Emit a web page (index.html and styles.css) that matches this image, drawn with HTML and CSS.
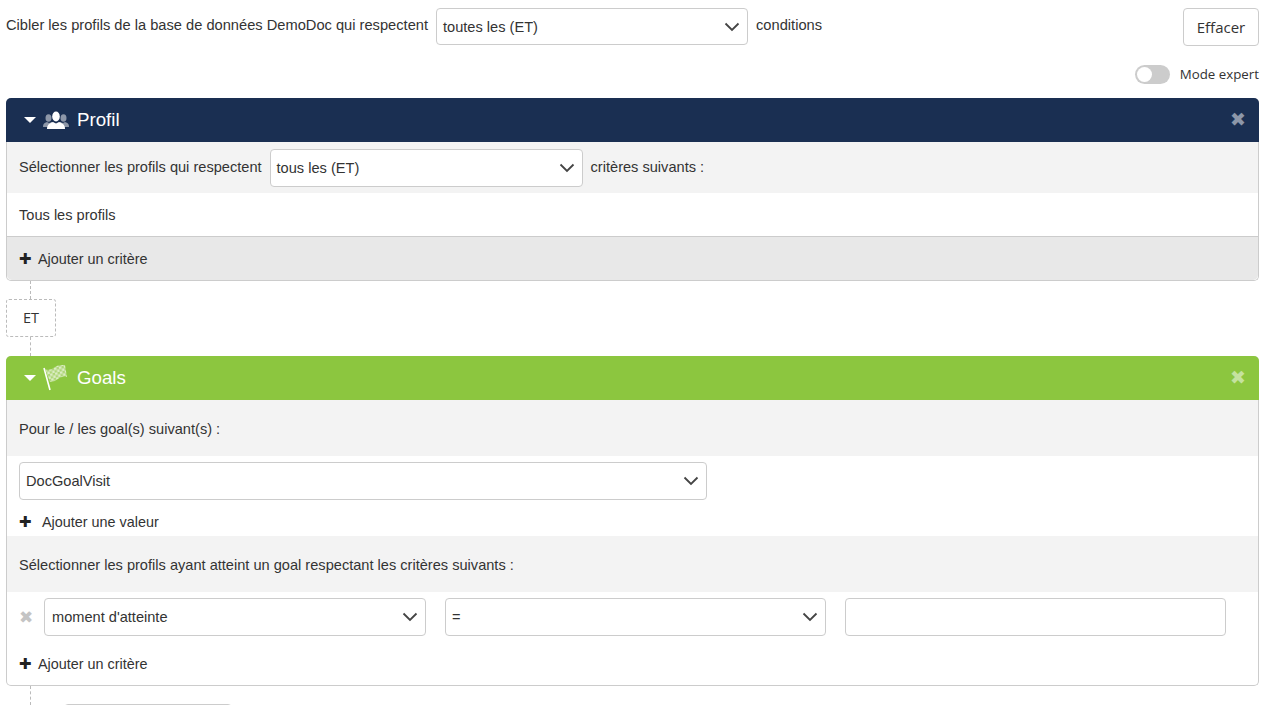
FILE: index.html
```html
<!DOCTYPE html>
<html lang="fr">
<head>
    <meta charset="UTF-8">
    <meta name="viewport" content="width=device-width, initial-scale=1.0">
    <title>Ciblage</title>
    <link rel="stylesheet" href="styles.css">
</head>
<body>
    <div class="top-row">
        <span class="top-label">Cibler les profils de la base de données DemoDoc qui respectent</span>
        <div class="select select-top">
            <span>toutes les (ET)</span>
            <svg class="chevron" viewBox="0 0 16 10"><path d="M1.5 1.5 8 8l6.500-6.500"/></svg>
        </div>
        <span class="top-label">conditions</span>
        <button class="btn-clear">Effacer</button>
    </div>

    <div class="expert-row">
        <span class="switch"><span class="switch-knob"></span></span>
        <span>Mode expert</span>
    </div>

    <div class="panel">
        <div class="panel-head head-profil">
            <span class="caret"></span>
            <svg class="head-icon" viewBox="0 0 26 26">
                <g fill="#8d97a8">
                    <ellipse cx="5.500" cy="11" rx="3" ry="3.800"/>
                    <ellipse cx="20.500" cy="11" rx="3" ry="3.800"/>
                    <path d="M0 20c0-3 1-4 4-5l2 1 3-1 2 3-2 2zM26 20c0-3-1-4-4-5l-2 1-3-1-2 3 2 2z"/>
                </g>
                <g fill="#fff">
                    <ellipse cx="13" cy="9.500" rx="3.800" ry="5"/>
                    <path d="M4 22c0-4 2-5.500 6-7l3 1.500 3-1.500c4 1.500 6 3 6 7z"/>
                </g>
            </svg>
            <span class="panel-title">Profil</span>
            <span class="close">✖</span>
        </div>
        <div class="row row-grey row-select">
            <span class="row-label">Sélectionner les profils qui respectent</span>
            <div class="select select-profil">
                <span>tous les (ET)</span>
                <svg class="chevron" viewBox="0 0 16 10"><path d="M1.5 1.5 8 8l6.500-6.500"/></svg>
            </div>
            <span class="row-label">critères suivants :</span>
        </div>
        <div class="row row-all">Tous les profils</div>
        <div class="row row-add-bar add-link"><span class="plus">✚</span>Ajouter un critère</div>
    </div>

    <div class="connector">
        <div class="line line-a"></div>
        <div class="et-box">ET</div>
        <div class="line line-b"></div>
    </div>

    <div class="panel">
        <div class="panel-head head-goals">
            <span class="caret"></span>
            <svg class="head-icon" viewBox="0 0 26 26">
                <defs>
                    <pattern id="check" width="5" height="5" patternUnits="userSpaceOnUse" patternTransform="rotate(-12)">
                        <rect width="5" height="5" fill="#aed677"/>
                        <rect width="2.500" height="2.500" fill="#dcedc4"/>
                        <rect x="2.500" y="2.500" width="2.500" height="2.500" fill="#dcedc4"/>
                    </pattern>
                </defs>
                <path d="M1 3l6 22" stroke="#fff" stroke-width="1.600" fill="none"/>
                <path d="M2 4c4 2 7 0 10-2s7-2 10-2l2 12c-4-1-6 0-9 2s-5 3-8 3z" fill="url(#check)"/>
            </svg>
            <span class="panel-title">Goals</span>
            <span class="close">✖</span>
        </div>
        <div class="row row-grey row-text">Pour le / les goal(s) suivant(s) :</div>
        <div class="goal-values">
            <div class="select select-goal">
                <span>DocGoalVisit</span>
                <svg class="chevron" viewBox="0 0 16 10"><path d="M1.5 1.5 8 8l6.500-6.500"/></svg>
            </div>
            <div class="add-value add-link"><span class="plus plus-wide">✚</span>Ajouter une valeur</div>
        </div>
        <div class="row row-grey row-text">Sélectionner les profils ayant atteint un goal respectant les critères suivants :</div>
        <div class="criterion">
            <span class="remove">✖</span>
            <div class="select select-crit">
                <span>moment d'atteinte</span>
                <svg class="chevron" viewBox="0 0 16 10"><path d="M1.5 1.5 8 8l6.500-6.500"/></svg>
            </div>
            <div class="select select-crit">
                <span>=</span>
                <svg class="chevron" viewBox="0 0 16 10"><path d="M1.5 1.5 8 8l6.500-6.500"/></svg>
            </div>
            <input class="crit-input" type="text">
        </div>
        <div class="add-crit add-link"><span class="plus">✚</span>Ajouter un critère</div>
    </div>

    <div class="bottom">
        <div class="line line-c"></div>
        <div class="bottom-btn"></div>
    </div>
</body>
</html>
```

FILE: styles.css
```css
html, body {
    height: 705px;
    overflow: hidden;
}
body {
    margin: 0;
    padding: 8px 9px 0 6px;
    font-family: "Liberation Sans", Arial, sans-serif;
    font-size: 14.6px;
    color: #333;
    background-color: #fff;
}
.top-row {
    display: flex;
    align-items: flex-start;
    height: 38px;
}
.top-label {
    font-size: 14.670px;
    line-height: 34px;
}
.select {
    display: flex;
    align-items: center;
    justify-content: space-between;
    height: 38px;
    box-sizing: border-box;
    padding: 0 7px 0 6px;
    border: 1px solid #ccc;
    border-radius: 4px;
    background-color: #fff;
}
.chevron {
    width: 16px;
    height: 10px;
    fill: none;
    stroke: #444;
    stroke-width: 1.800;
}
.select-top {
    width: 312px;
    height: 37px;
    margin: 0 8px;
}
.btn-clear {
    margin-left: auto;
    width: 76px;
    height: 38px;
    border: 1px solid #ccc;
    border-radius: 4px;
    background-color: #fff;
    color: #333;
    font-family: "Open Sans", sans-serif;
    font-size: 15px;
}
.expert-row {
    display: flex;
    justify-content: flex-end;
    align-items: center;
    gap: 10px;
    height: 20px;
    margin: 18px 0 14px;
    font-family: "Open Sans", sans-serif;
    font-size: 13.300px;
    line-height: 18px;
}
.switch {
    display: block;
    width: 35px;
    height: 19px;
    border-radius: 10px;
    background-color: #ccc;
}
.switch-knob {
    display: block;
    width: 15px;
    height: 15px;
    margin: 2px;
    border-radius: 50%;
    background-color: #fff;
}
.panel {
    border: 1px solid #ccc;
    border-top: none;
    border-radius: 5px;
}
.panel-head {
    display: flex;
    align-items: center;
    height: 44px;
    margin: 0 -1px;
    padding: 0 13px 0 18px;
    border-radius: 5px 5px 0 0;
    color: #fff;
    font-size: 18.700px;
}
.head-profil {
    background-color: #1a2f52;
}
.head-goals {
    background-color: #8cc63f;
}
.caret {
    width: 0;
    height: 0;
    border-left: 6px solid transparent;
    border-right: 6px solid transparent;
    border-top: 6px solid #fff;
}
.head-icon {
    width: 26px;
    height: 26px;
    margin: 0 8px 0 7px;
}
.panel-title {
    flex: 1;
}
.close {
    font-size: 19px;
    line-height: 20px;
    opacity: 0.5;
}
.row {
    padding: 0 12px;
}
.row-grey {
    background-color: #f3f3f3;
}
.row-select {
    display: flex;
    align-items: center;
    gap: 8px;
    height: 51px;
}
.row-label {
    margin-bottom: 2px;
}
.select-profil {
    width: 313px;
}
.row-all {
    line-height: 45px;
    height: 43px;
}
.add-link {
    font-size: 14.400px;
}
.row-add-bar {
    height: 43px;
    line-height: 43px;
    border-top: 1px solid #ccc;
    border-radius: 0 0 5px 5px;
    background-color: #e8e8e8;
}
.plus {
    display: inline-block;
    width: 19px;
    font-size: 15px;
    color: #222;
}
.plus-wide {
    width: 23px;
}
.connector {
    height: 75px;
    position: relative;
}
.line {
    position: absolute;
    left: 24px;
    border-left: 1px dashed #bbb;
}
.line-a {
    top: 0;
    height: 18px;
}
.line-b {
    top: 56px;
    height: 19px;
}
.et-box {
    position: absolute;
    top: 18px;
    left: 0;
    box-sizing: border-box;
    width: 50px;
    height: 38px;
    border: 1px dashed #bbb;
    border-radius: 3px;
    font-family: "Open Sans", sans-serif;
    font-size: 14.500px;
    line-height: 36px;
    text-align: center;
}
.row-text {
    height: 56px;
    line-height: 58px;
}
.goal-values {
    height: 80px;
    padding: 6px 12px 0;
    box-sizing: border-box;
}
.select-goal {
    width: 688px;
}
.add-value {
    margin-top: 13px;
    line-height: 18px;
}
.criterion {
    display: flex;
    align-items: center;
    gap: 19px;
    height: 38px;
    padding: 6px 0 0 12px;
}
.remove {
    width: 12px;
    margin-right: -6px;
    font-size: 17px;
    color: #c4c4c4;
}
.select-crit {
    width: 382px;
    padding-left: 7px;
}
.select-crit + .select-crit {
    width: 381px;
    padding-left: 6px;
}
.crit-input {
    width: 381px;
    height: 38px;
    box-sizing: border-box;
    border: 1px solid #ccc;
    border-radius: 4px;
}
.add-crit {
    height: 49px;
    line-height: 56px;
    padding-left: 12px;
}
.bottom {
    position: relative;
    height: 30px;
}
.line-c {
    top: 0;
    height: 19px;
}
.bottom-btn {
    position: absolute;
    top: 18px;
    left: 58px;
    width: 166px;
    height: 30px;
    border: 1px solid #ccc;
    border-radius: 4px;
}
```
